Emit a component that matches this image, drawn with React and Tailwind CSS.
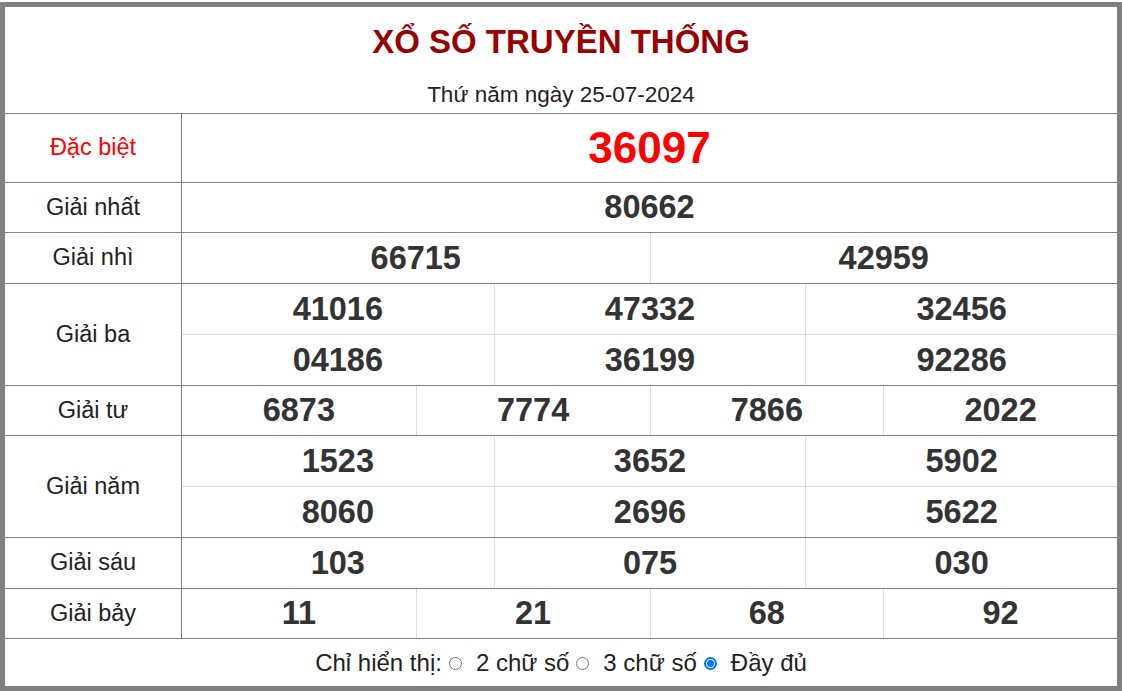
import React from "react";

const Num = ({ children, cls = "" }) => (
  <div className={"flex items-center justify-center font-bold text-[32.5px] text-[#333333] " + cls}>{children}</div>
);

const Label = ({ children, red }) => (
  <div className={"w-[177px] shrink-0 border-r border-[#808080] flex items-center justify-center text-[23.5px] " + (red ? "text-[#ff0000]" : "text-[#222222]")}>
    {children}
  </div>
);

const Row3 = ({ vals, top }) => (
  <div className={"grid grid-cols-3 " + (top ? "h-[51px] border-t border-[#dddddd]" : "h-[50px]")}>
    {vals.map((v, i) => (
      <Num key={i} cls={i > 0 ? "border-l border-[#dddddd]" : ""}>{v}</Num>
    ))}
  </div>
);

const Row4 = ({ vals }) => (
  <div className="grid grid-cols-4 h-full">
    {vals.map((v, i) => (
      <Num key={i} cls={i > 0 ? "border-l border-[#dddddd]" : ""}>{v}</Num>
    ))}
  </div>
);

const Radio = ({ checked }) =>
  checked ? (
    <span className="shrink-0 ml-[7px] mr-[14px] mt-[1px] w-[13px] h-[13px] rounded-full border-[2px] border-[#0075ff] bg-white flex items-center justify-center">
      <span className="w-[7px] h-[7px] rounded-full bg-[#0075ff]" />
    </span>
  ) : (
    <span className="shrink-0 ml-[7px] mr-[14px] mt-[1px] block w-[13px] h-[13px] rounded-full border-[1.5px] border-[#767676] bg-white" />
  );

export default function App() {
  return (
    <div className="mt-[2px] w-[1122px] h-[689px] border-[5px] border-[#808080] bg-white font-['Liberation_Sans',Arial,sans-serif] flex flex-col">
      <div className="h-[106px] flex flex-col items-center">
        <div className="mt-[15px] text-[33px] leading-[40px] font-bold text-[#990000]">XỔ SỐ TRUYỀN THỐNG</div>
        <div className="mt-[19px] text-[22.5px] leading-[28px] text-[#222222]">Thứ năm ngày 25-07-2024</div>
      </div>

      <div className="flex h-[69px] border-t border-[#808080]">
        <Label red>Đặc biệt</Label>
        <div className="flex-1 flex items-center justify-center font-bold text-[44px] text-[#ff0000]">36097</div>
      </div>

      <div className="flex h-[50px] border-t border-[#808080]">
        <Label>Giải nhất</Label>
        <Num cls="flex-1">80662</Num>
      </div>

      <div className="flex h-[51px] border-t border-[#808080]">
        <Label>Giải nhì</Label>
        <div className="flex-1 grid grid-cols-2">
          <Num>66715</Num>
          <Num cls="border-l border-[#dddddd]">42959</Num>
        </div>
      </div>

      <div className="flex h-[102px] border-t border-[#808080]">
        <Label>Giải ba</Label>
        <div className="flex-1 flex flex-col">
          <Row3 vals={["41016", "47332", "32456"]} />
          <Row3 top vals={["04186", "36199", "92286"]} />
        </div>
      </div>

      <div className="flex h-[50px] border-t border-[#808080]">
        <Label>Giải tư</Label>
        <div className="flex-1">
          <Row4 vals={["6873", "7774", "7866", "2022"]} />
        </div>
      </div>

      <div className="flex h-[102px] border-t border-[#808080]">
        <Label>Giải năm</Label>
        <div className="flex-1 flex flex-col">
          <Row3 vals={["1523", "3652", "5902"]} />
          <Row3 top vals={["8060", "2696", "5622"]} />
        </div>
      </div>

      <div className="flex h-[51px] border-t border-[#808080]">
        <Label>Giải sáu</Label>
        <div className="flex-1 grid grid-cols-3">
          <Num>103</Num>
          <Num cls="border-l border-[#dddddd]">075</Num>
          <Num cls="border-l border-[#dddddd]">030</Num>
        </div>
      </div>

      <div className="flex h-[50px] border-t border-[#808080]">
        <Label>Giải bảy</Label>
        <div className="flex-1">
          <Row4 vals={["11", "21", "68", "92"]} />
        </div>
      </div>

      <div className="flex-1 border-t border-[#808080] flex items-center justify-center text-[24px] text-[#222222]">
        <span>Chỉ hiển thị:</span>
        <Radio />
        <span>2 chữ số</span>
        <Radio />
        <span>3 chữ số</span>
        <Radio checked />
        <span>Đầy đủ</span>
      </div>
    </div>
  );
}
